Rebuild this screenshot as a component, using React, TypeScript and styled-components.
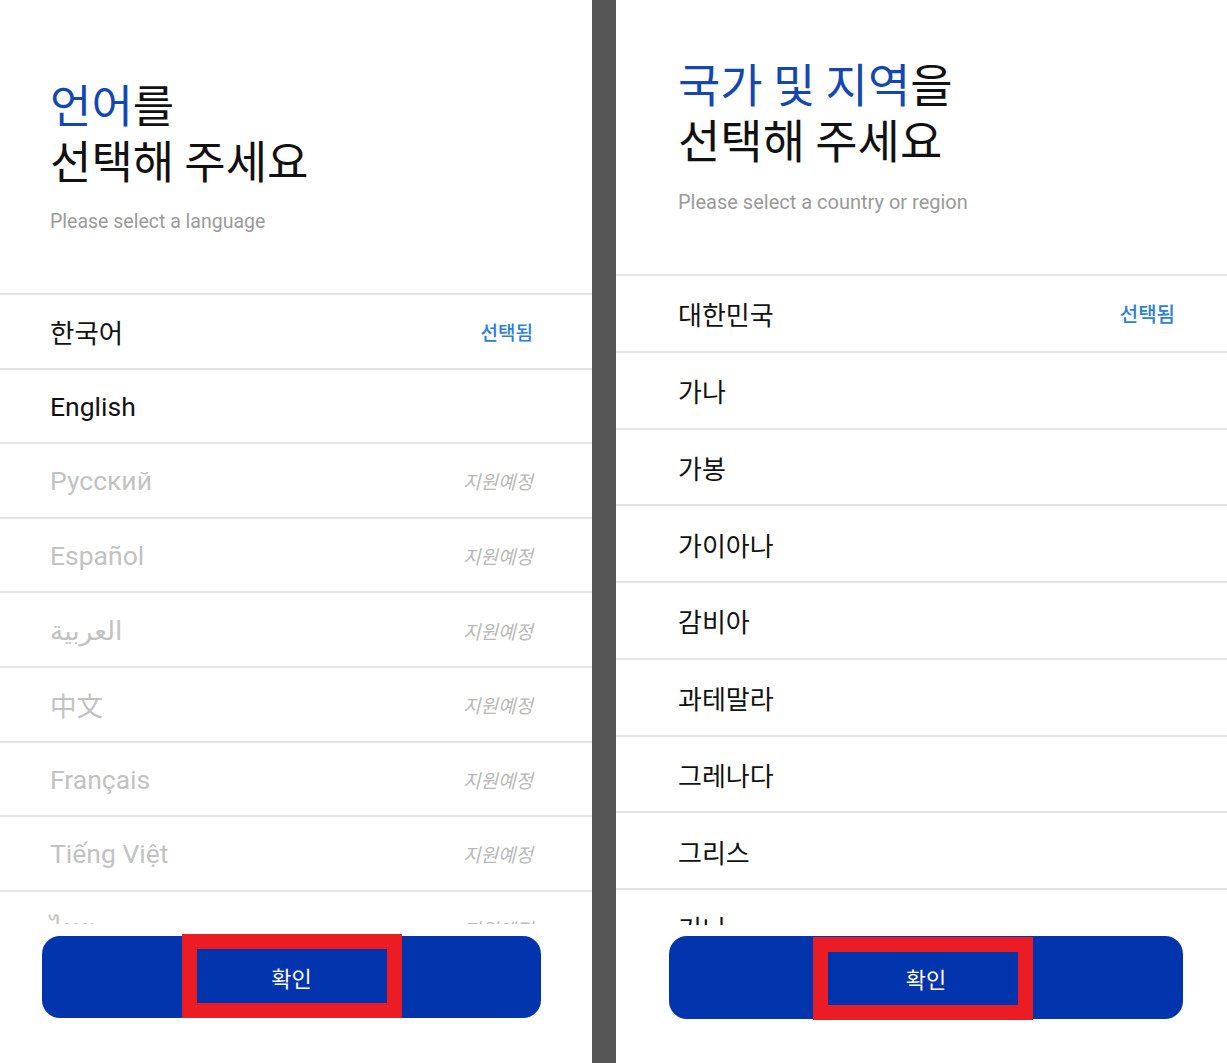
import styled, { createGlobalStyle } from "styled-components";

const GlobalStyle = createGlobalStyle`
  html, body {
    margin: 0;
    padding: 0;
    background: #fff;
  }
  body {
    font-family: Roboto, "Noto Sans CJK KR", "DejaVu Sans", sans-serif;
  }
`;

type Status = "selected" | "soon" | undefined;

type Item = { name: string; status?: Status };

type PanelConfig = {
  width: number;
  padLeft: number;
  padRight: number;
  headTop: number;
  titleSize: number;
  subSize: number;
  subGap: number;
  listGap: number;
  rowHeight: number;
  labelSize: number;
  statusSize: number;
  btnTop: number;
  btnHeight: number;
  btnBottom: number;
  btnLeft: number;
  btnRight: number;
  markLeft: number;
  markTop: number;
  markHeight: number;
};

const languages: Item[] = [
  { name: "한국어", status: "selected" },
  { name: "English" },
  { name: "Русский", status: "soon" },
  { name: "Español", status: "soon" },
  { name: "العربية", status: "soon" },
  { name: "中文", status: "soon" },
  { name: "Français", status: "soon" },
  { name: "Tiếng Việt", status: "soon" },
  { name: "ไทย", status: "soon" },
];

const countries: Item[] = [
  { name: "대한민국", status: "selected" },
  { name: "가나" },
  { name: "가봉" },
  { name: "가이아나" },
  { name: "감비아" },
  { name: "과테말라" },
  { name: "그레나다" },
  { name: "그리스" },
  { name: "기니" },
];

const leftCfg: PanelConfig = {
  width: 592,
  padLeft: 50,
  padRight: 59,
  headTop: 76,
  titleSize: 45,
  subSize: 19.5,
  subGap: 21,
  listGap: 58,
  rowHeight: 74.6,
  labelSize: 26.5,
  statusSize: 19,
  btnTop: 12,
  btnHeight: 82,
  btnBottom: 45,
  btnLeft: 42,
  btnRight: 51,
  markLeft: 140,
  markTop: -2,
  markHeight: 84,
};

const rightCfg: PanelConfig = {
  width: 611,
  padLeft: 62,
  padRight: 52,
  headTop: 54,
  titleSize: 46,
  subSize: 20,
  subGap: 23,
  listGap: 59,
  rowHeight: 76.75,
  labelSize: 26,
  statusSize: 20,
  btnTop: 11,
  btnHeight: 83,
  btnBottom: 44,
  btnLeft: 53,
  btnRight: 44,
  markLeft: 144,
  markTop: 1,
  markHeight: 83,
};

function SelectPanel({
  cfg,
  accent,
  rest,
  subtitle,
  items,
}: {
  cfg: PanelConfig;
  accent: string;
  rest: string;
  subtitle: string;
  items: Item[];
}) {
  return (
    <Panel $w={cfg.width}>
      <Header $top={cfg.headTop} $pl={cfg.padLeft}>
        <Title $size={cfg.titleSize}>
          <Accent>{accent}</Accent>
          {rest}
          <br />
          선택해 주세요
        </Title>
        <Subtitle $size={cfg.subSize} $gap={cfg.subGap}>
          {subtitle}
        </Subtitle>
      </Header>
      <List $gap={cfg.listGap}>
        {items.map((item) => (
          <Row
            key={item.name}
            $h={cfg.rowHeight}
            $pl={cfg.padLeft}
            $pr={cfg.padRight}
          >
            <Label $size={cfg.labelSize} $muted={item.status === "soon"}>
              {item.name}
            </Label>
            {item.status === "selected" && (
              <Selected $size={cfg.statusSize}>선택됨</Selected>
            )}
            {item.status === "soon" && (
              <Soon $size={cfg.statusSize}>지원예정</Soon>
            )}
          </Row>
        ))}
      </List>
      <Footer
        $top={cfg.btnTop}
        $bottom={cfg.btnBottom}
        $pl={cfg.btnLeft}
        $pr={cfg.btnRight}
      >
        <ConfirmButton $h={cfg.btnHeight}>
          확인
          <Highlight
            $left={cfg.markLeft}
            $top={cfg.markTop}
            $h={cfg.markHeight}
          />
        </ConfirmButton>
      </Footer>
    </Panel>
  );
}

export default function App() {
  return (
    <>
      <GlobalStyle />
      <Screen>
        <SelectPanel
          cfg={leftCfg}
          accent="언어"
          rest="를"
          subtitle="Please select a language"
          items={languages}
        />
        <Gutter />
        <SelectPanel
          cfg={rightCfg}
          accent="국가 및 지역"
          rest="을"
          subtitle="Please select a country or region"
          items={countries}
        />
      </Screen>
    </>
  );
}

const Screen = styled.div`
  display: flex;
  width: 1227px;
  height: 1063px;
  overflow: hidden;
`;

const Gutter = styled.div`
  width: 24px;
  flex-shrink: 0;
  background: #565656;
`;

const Panel = styled.div<{ $w: number }>`
  width: ${(p) => p.$w}px;
  flex-shrink: 0;
  height: 100%;
  display: flex;
  flex-direction: column;
  background: #fff;
`;

const Header = styled.div<{ $top: number; $pl: number }>`
  padding: ${(p) => p.$top}px 0 0 ${(p) => p.$pl}px;
`;

const Title = styled.h1<{ $size: number }>`
  margin: 0;
  font-family: "Noto Sans CJK KR", sans-serif;
  font-weight: 400;
  font-size: ${(p) => p.$size}px;
  line-height: 56px;
  color: #111;
`;

const Accent = styled.span`
  color: #1448b0;
`;

const Subtitle = styled.p<{ $size: number; $gap: number }>`
  margin: ${(p) => p.$gap}px 0 0;
  font-family: Roboto, sans-serif;
  font-size: ${(p) => p.$size}px;
  line-height: 26px;
  color: #9a9a9a;
`;

const List = styled.div<{ $gap: number }>`
  flex: 1;
  min-height: 0;
  overflow: hidden;
  margin-top: ${(p) => p.$gap}px;
`;

const Row = styled.div<{ $h: number; $pl: number; $pr: number }>`
  box-sizing: border-box;
  height: ${(p) => p.$h}px;
  display: flex;
  align-items: center;
  justify-content: space-between;
  padding: 1px ${(p) => p.$pr}px 0 ${(p) => p.$pl}px;
  border-top: 2px solid #e3e3e3;
`;

const Label = styled.span<{ $size: number; $muted: boolean }>`
  font-size: ${(p) => p.$size}px;
  color: ${(p) => (p.$muted ? "#c2c2c2" : "#111")};
`;

const Selected = styled.span<{ $size: number }>`
  font-family: "Noto Sans CJK KR", sans-serif;
  font-size: ${(p) => p.$size}px;
  font-weight: 500;
  color: #2b80d8;
`;

const Soon = styled.span<{ $size: number }>`
  font-family: "Noto Sans CJK KR", sans-serif;
  font-size: ${(p) => p.$size}px;
  font-style: italic;
  color: #b8b8b8;
`;

const Footer = styled.div<{
  $top: number;
  $bottom: number;
  $pl: number;
  $pr: number;
}>`
  padding: ${(p) => p.$top}px ${(p) => p.$pr}px ${(p) => p.$bottom}px
    ${(p) => p.$pl}px;
`;

const ConfirmButton = styled.button<{ $h: number }>`
  position: relative;
  width: 100%;
  height: ${(p) => p.$h}px;
  display: flex;
  align-items: center;
  justify-content: center;
  border: none;
  border-radius: 18px;
  background: #0234ae;
  color: #fff;
  font-family: "Noto Sans CJK KR", sans-serif;
  font-size: 22px;
  padding: 0;
`;

const Highlight = styled.span<{ $left: number; $top: number; $h: number }>`
  position: absolute;
  left: ${(p) => p.$left}px;
  top: ${(p) => p.$top}px;
  width: 220px;
  height: ${(p) => p.$h}px;
  box-sizing: border-box;
  border: 15px solid #ec1c24;
`;
